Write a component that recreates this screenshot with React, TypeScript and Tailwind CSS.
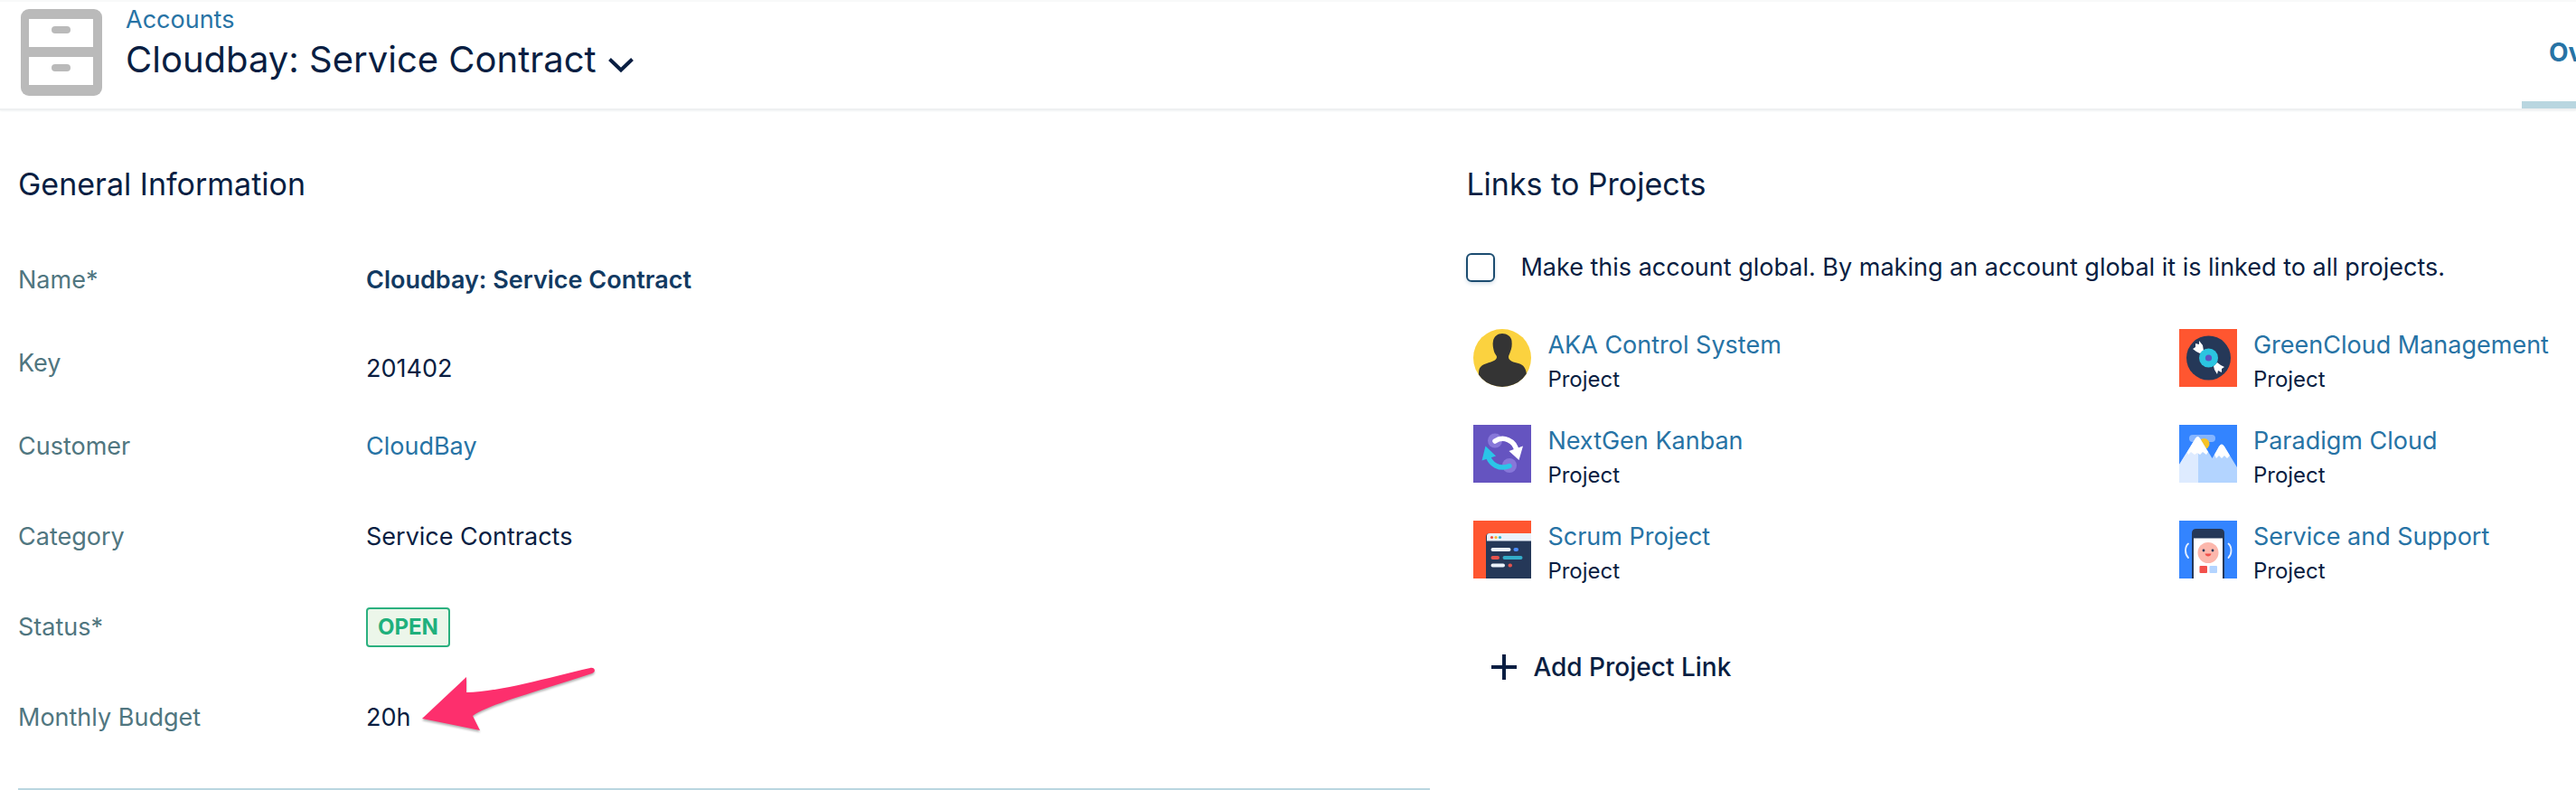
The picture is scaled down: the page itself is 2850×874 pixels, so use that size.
import type { ReactNode } from "react";

type Row = { label: string; value: ReactNode; gap: string; valueClass?: string };

const rows: Row[] = [
  {
    label: "Name*",
    value: <span className="font-semibold text-[#123a62]">Cloudbay: Service Contract</span>,
    gap: "mt-0",
  },
  { label: "Key", value: "201402", gap: "mt-12", valueClass: "pt-3" },
  {
    label: "Customer",
    value: (
      <a href="#customer" className="text-[#2773a5]">
        CloudBay
      </a>
    ),
    gap: "mt-12",
  },
  { label: "Category", value: "Service Contracts", gap: "mt-14" },
  {
    label: "Status*",
    value: (
      <span className="flex h-11 items-center rounded border-2 border-[#2bb07f] bg-[#ecf6ea] px-[11px] text-2xl font-bold text-[#1fb07c]">
        OPEN
      </span>
    ),
    gap: "mt-14",
  },
  {
    label: "Monthly Budget",
    value: (
      <span className="relative">
        20h
        <PointerArrow />
      </span>
    ),
    gap: "mt-14",
  },
];

const projects = [
  { name: "AKA Control System", icon: <PersonIcon /> },
  { name: "GreenCloud Management", icon: <VinylIcon /> },
  { name: "NextGen Kanban", icon: <CycleIcon /> },
  { name: "Paradigm Cloud", icon: <MountainIcon /> },
  { name: "Scrum Project", icon: <CodeIcon /> },
  { name: "Service and Support", icon: <PhoneIcon /> },
];

function PointerArrow() {
  return (
    <svg
      viewBox="0 0 200 80"
      className="absolute top-[-40px] left-[60px] h-20 w-[200px] overflow-visible drop-shadow-[0_2px_1px_rgba(0,0,0,0.3)]"
      aria-hidden="true"
    >
      <path
        d="M2 58 L51 12 L51 29 C90 28 140 13 188 2 C193 1 195 6 190 8 C140 25 75 42 58 55 L66 71 Z"
        fill="#fd2f6d"
      />
    </svg>
  );
}

function CabinetIcon() {
  return (
    <svg viewBox="0 0 90 96" className="h-24 w-[90px] shrink-0" aria-hidden="true">
      <rect width="90" height="96" rx="9" fill="#bababa" />
      <rect x="9" y="11" width="71" height="31" fill="#fff" />
      <rect x="9" y="53" width="71" height="31" fill="#fff" />
      <rect x="34" y="19" width="21" height="8" rx="4" fill="#bababa" />
      <rect x="34" y="61" width="21" height="8" rx="4" fill="#bababa" />
    </svg>
  );
}

function PersonIcon() {
  return (
    <svg viewBox="0 0 64 64" className="size-16 shrink-0" aria-hidden="true">
      <clipPath id="avatar">
        <circle cx="32" cy="32" r="32" />
      </clipPath>
      <g clipPath="url(#avatar)">
        <rect width="64" height="64" fill="#fbd23f" />
        <path
          d="M32 5 C37 5 42 8 42.500 13 C43 18 42.500 21 41 25 C40 28 39 29 39 31 C39 35 45 37 50 38 C56 40 58 43 59 50 L60 64 H4 L6 49 C6 42 9 40 15 38 C20 36 26 35 26 31 C26 29 24 28 23 25 C22 21 21 17 22 13 C23 8 27 5 32 5Z"
          fill="#343434"
        />
      </g>
    </svg>
  );
}

function VinylIcon() {
  return (
    <svg viewBox="0 0 64 64" className="size-16 shrink-0" aria-hidden="true">
      <rect width="64" height="64" fill="#ff5630" />
      <circle cx="32.500" cy="32" r="24.500" fill="#253858" />
      <path
        d="M15 22 L18 20 L18 16 L22 17 L22 13 L26 18 L27 24 L23 27 L19 25Z M50 42 L47 44 L47 48 L43 46 L42 50 L39 45 L38 41 L42 37 L46 40Z"
        fill="#fff"
      />
      <circle cx="32.500" cy="32" r="10.500" fill="#2bc5e0" />
      <circle cx="32.500" cy="32" r="3.600" fill="#5b55c4" />
    </svg>
  );
}

function CycleIcon() {
  return (
    <svg viewBox="0 0 64 64" className="size-16 shrink-0" aria-hidden="true">
      <rect width="64" height="64" fill="#6554c0" />
      <circle cx="24" cy="17.500" r="8" fill="#8777d9" />
      <circle cx="40" cy="45" r="8" fill="#8777d9" />
      <path d="M24 18 C33 12 46 17 48 29" fill="none" stroke="#fff" strokeWidth="5.500" strokeLinecap="round" />
      <path d="M39.500 29 L55 23.500 L50.500 39Z" fill="#fff" />
      <path d="M40 45.500 C29 50 19 44 16 34" fill="none" stroke="#2bc5e8" strokeWidth="5.500" strokeLinecap="round" />
      <path d="M13.500 23.500 L25 34.500 L9.500 39.500Z" fill="#2bc5e8" />
    </svg>
  );
}

function MountainIcon() {
  return (
    <svg viewBox="0 0 64 64" className="size-16 shrink-0" aria-hidden="true">
      <rect width="64" height="64" fill="#3384ff" />
      <rect x="11" y="11" width="29" height="8" rx="4" fill="#85b5ff" />
      <circle cx="27.500" cy="21" r="6" fill="#f7c325" />
      <path d="M0 44 L18 15 Q20.500 11 23 15 L36.500 37 L44 24 Q47 19 50 24 L64 47 V64 H0Z" fill="#b3d4ff" />
      <path d="M0 44 L18 15 L21 13 V64 H0Z" fill="#deebff" />
      <path
        d="M9 30 L18 15 Q20.500 11 23 15 L32 30 L30 33 L26 30 L23 33 L20 31 L17 33 L13 30 L10 33Z M39 33 L44 24 Q47 19 50 24 L56 34 L53 37 L50 34 L47 37 L44 34 L41 37Z"
        fill="#fff"
      />
    </svg>
  );
}

function CodeIcon() {
  return (
    <svg viewBox="0 0 64 64" className="size-16 shrink-0" aria-hidden="true">
      <rect width="64" height="64" fill="#ff5630" />
      <path d="M14 64 V18 Q14 14 18 14 H64 V64Z" fill="#253858" />
      <path d="M15 22.500 V17 Q15 14 18 14 H64 V22.500Z" fill="#ebf2fb" />
      <circle cx="20.500" cy="18.500" r="1.600" fill="#f0503c" />
      <circle cx="25" cy="18.500" r="1.600" fill="#f7b82d" />
      <circle cx="29.500" cy="18.500" r="1.600" fill="#2fb5d0" />
      <g strokeWidth="4" strokeLinecap="round">
        <path d="M21.500 32 H39.500 M21.500 49.500 H33" stroke="#ebf2fb" />
        <path d="M46.500 32 H48" stroke="#4c8dff" />
        <path d="M21.500 41 H27 M40.500 49.500 H41" stroke="#e5534d" />
        <path d="M34.500 41 H52.500" stroke="#34adc9" />
      </g>
    </svg>
  );
}

function PhoneIcon() {
  return (
    <svg viewBox="0 0 64 64" className="size-16 shrink-0" aria-hidden="true">
      <rect width="64" height="64" fill="#3384ff" />
      <path d="M14 64 V14 Q14 9 19 9 H45 Q50 9 50 14 V64Z" fill="#253858" />
      <rect x="16" y="19.500" width="32" height="45" fill="#fff" />
      <circle cx="32" cy="35.500" r="11.500" fill="#fcb7ac" />
      <circle cx="27" cy="33" r="1.400" fill="#253858" />
      <circle cx="37" cy="33" r="1.400" fill="#253858" />
      <path d="M28.500 36.500 H35.500 C35 40.500 29 40.500 28.500 36.500Z" fill="#f2504b" />
      <rect x="22.500" y="50" width="8.500" height="8" rx="1" fill="#f2504b" />
      <rect x="33.500" y="50" width="8.500" height="8" rx="1" fill="#b3d4ff" />
      <path
        d="M10 25.500 C6 29 6 37 10 41 M54.500 25.500 C58.500 29 58.500 37 54.500 41"
        fill="none"
        stroke="#e4efff"
        strokeWidth="1.800"
        strokeLinecap="round"
      />
    </svg>
  );
}

export default function App() {
  return (
    <div className="overflow-hidden bg-white font-[Inter,'Liberation_Sans',sans-serif] text-[27px] leading-9 text-[#091e42]">
      <header className="flex h-[122px] justify-between border-t-2 border-b-2 border-t-[#f8f9f9] border-b-[#eef0f1] shadow-[0_1px_2px_#f1f3f3]">
        <div className="flex gap-[26px] pt-2 pl-[23px]">
          <CabinetIcon />
          <div>
            <a href="#accounts" className="block h-8 leading-6 text-[#2773a5]">
              Accounts
            </a>
            <button type="button" className="flex items-center gap-3 text-[40px] leading-12">
              <h1>Cloudbay: Service Contract</h1>
              <svg viewBox="0 0 30 18" className="mt-3 h-[18px] w-[30px]" aria-hidden="true">
                <path d="M2.500 2.500 L15 14.500 L27.500 2.500" fill="none" stroke="#091e42" strokeWidth="4" />
              </svg>
            </button>
          </div>
        </div>
        <nav className="w-[60px] shrink-0 overflow-hidden border-b-8 border-[#b9d6e0] pt-[38px] pl-[30px]">
          <a href="#overview" className="text-[28px] font-bold text-[#2773a5]">
            Overview
          </a>
        </nav>
      </header>

      <main className="grid grid-cols-[56fr_44fr] gap-10 pt-[58px] pl-5">
        <section className="border-b-2 border-[#b9d6e0] pb-14">
          <h2 className="text-[34px] leading-12">General Information</h2>
          <dl className="pt-[60px]">
            {rows.map((row) => (
              <div key={row.label} className={`flex h-11 items-center ${row.gap}`}>
                <dt className="w-[385px] shrink-0 text-[#507680]">{row.label}</dt>
                <dd className={row.valueClass}>{row.value}</dd>
              </div>
            ))}
          </dl>
        </section>

        <section>
          <h2 className="text-[34px] leading-12">Links to Projects</h2>
          <label className="mt-[50px] flex items-center gap-7 whitespace-nowrap">
            <input
              type="checkbox"
              className="size-8 appearance-none rounded-md border-2 border-[#1b4c70] shadow-[0_2px_4px_#d5dfe8]"
            />
            Make this account global. By making an account global it is linked to all projects.
          </label>
          <ul className="grid grid-cols-[64fr_36fr] gap-y-[42px] pt-[50px] pl-2">
            {projects.map((project) => (
              <li key={project.name} className="flex h-16 gap-[18px]">
                {project.icon}
                <div className="whitespace-nowrap">
                  <a href="#project" className="block text-[#2773a5]">
                    {project.name}
                  </a>
                  <p className="pt-0.5 text-2xl leading-9">Project</p>
                </div>
              </li>
            ))}
          </ul>
          <button type="button" className="mt-20 ml-7 flex items-center gap-[18px] text-[28px] font-medium">
            <svg viewBox="0 0 28 28" className="size-7" aria-hidden="true">
              <path d="M14 0 V28 M0 14 H28" stroke="#091e42" strokeWidth="4" />
            </svg>
            Add Project Link
          </button>
        </section>
      </main>
    </div>
  );
}
